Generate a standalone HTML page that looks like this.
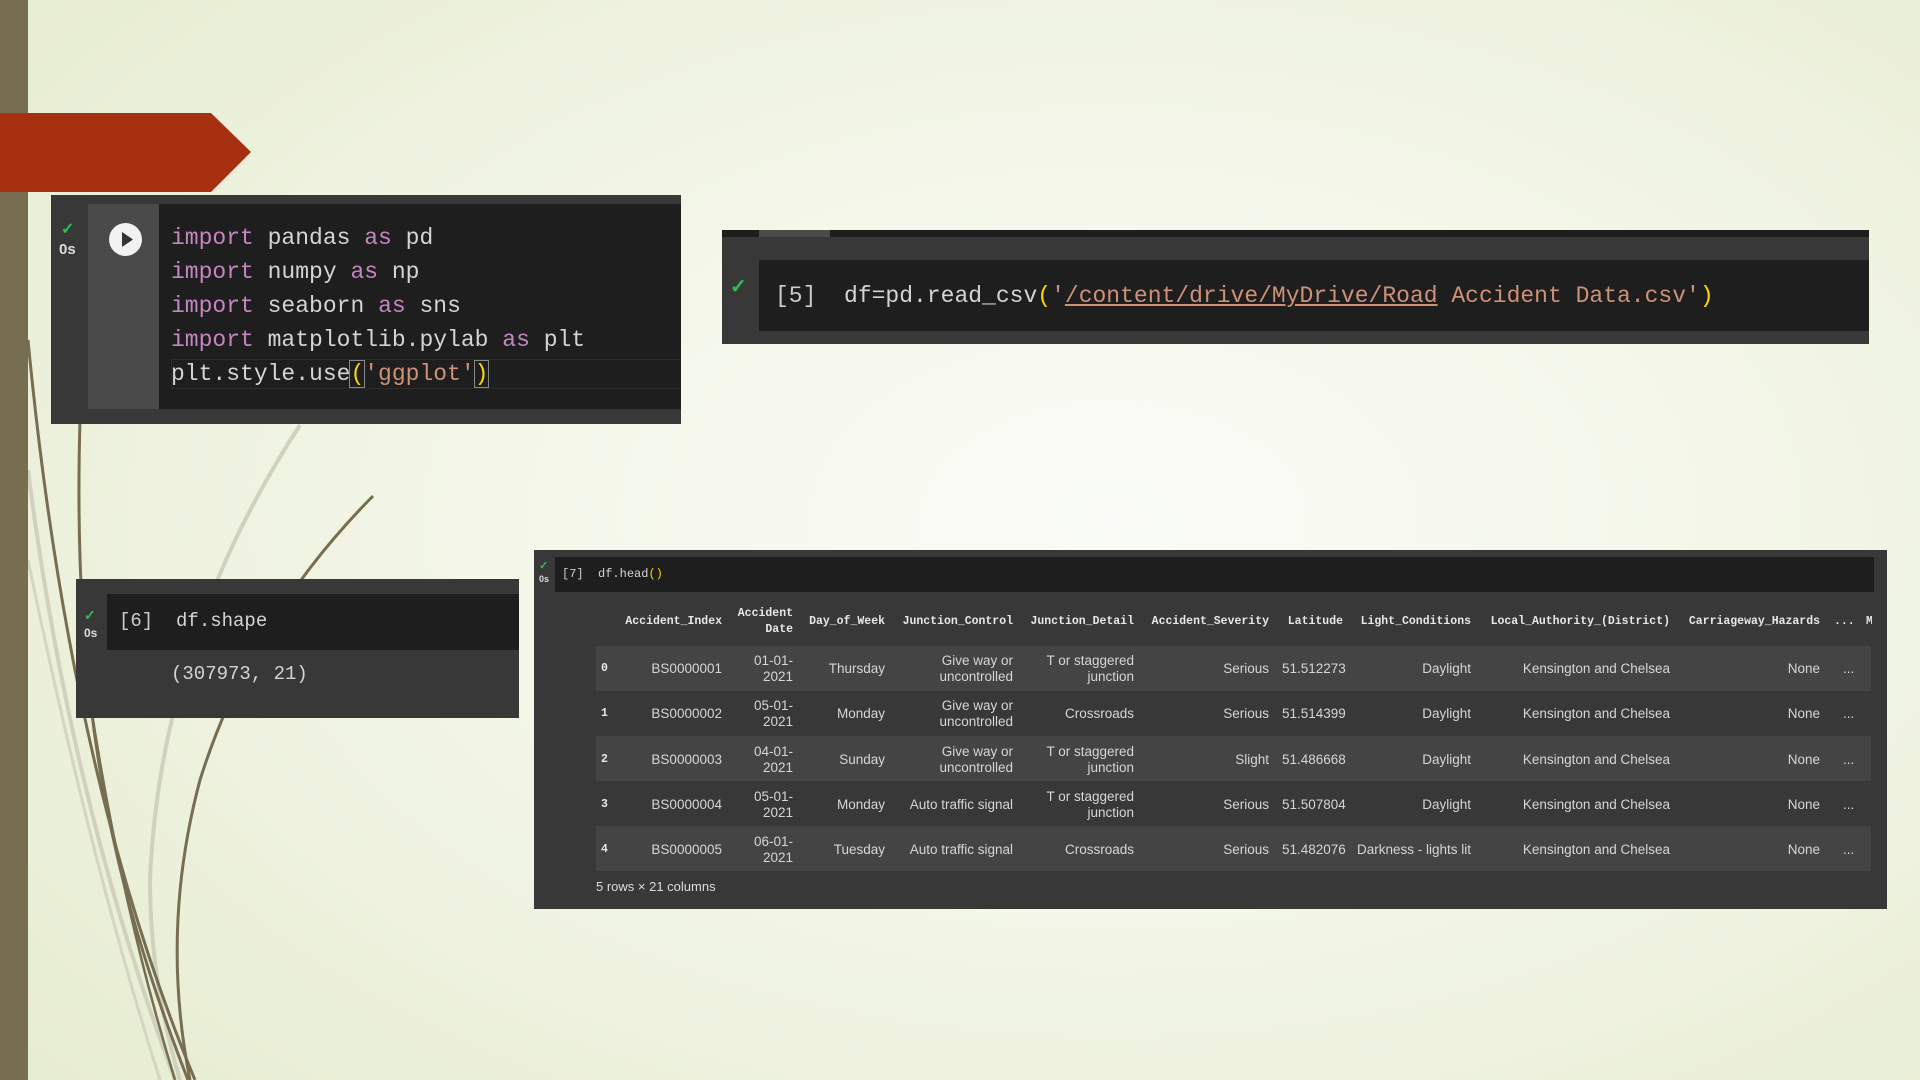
<!DOCTYPE html>
<html><head><meta charset="utf-8"><style>
*{margin:0;padding:0;box-sizing:border-box}
body{width:1920px;height:1080px;overflow:hidden;position:relative;font-family:"Liberation Sans",sans-serif;
background:radial-gradient(ellipse 75% 80% at 58% 48%,#fbfcf7 0%,#f3f6e8 45%,#e6ecd0 100%)}
.abs{position:absolute}
.mono{font-family:"Liberation Mono","DejaVu Sans Mono",monospace}
.kw{color:#c586c0}.tx{color:#d4d4d4}.st{color:#ce9178}.pn{color:#ffd700}
.chk{position:absolute;color:#2fbf55;font-size:16px;font-weight:bold}
.tc{position:absolute;font-size:13.5px;color:#d6d6d6;text-align:right;line-height:16px}
.th{position:absolute;font-family:"Liberation Mono",monospace;font-weight:bold;font-size:11.5px;color:#e8e8e8;text-align:right;line-height:16px}
</style></head><body>
<svg class="abs" style="left:0;top:0" width="1920" height="1080">
<path d="M300,425 Q160,640 150,880 Q150,980 180,1080" stroke="#cfd2bd" stroke-width="4" fill="none"/>
<path d="M28,470 Q70,800 175,1080" stroke="#cfd2bd" stroke-width="4" fill="none"/>
<path d="M28,560 Q90,860 160,1080" stroke="#d3d6c2" stroke-width="3" fill="none"/>
<path d="M28,340 Q70,780 195,1080" stroke="#776d50" stroke-width="3" fill="none"/>
<path d="M80,420 C72,700 110,880 188,1080" stroke="#776d50" stroke-width="3" fill="none"/>
<path d="M373,496 Q250,620 200,780 Q160,930 190,1080" stroke="#776d50" stroke-width="3" fill="none"/>
<path d="M90,700 Q120,900 175,1080" stroke="#776d50" stroke-width="2.5" fill="none"/>
</svg>
<div class="abs" style="left:0;top:0;width:28px;height:1080px;background:#776d51"></div>
<svg class="abs" style="left:0;top:113px" width="252" height="79"><polygon points="0,0 211,0 251,39 211,79 0,79" fill="#a73011"/></svg>

<!-- cell1 -->
<div class="abs" style="left:51px;top:195px;width:630px;height:229px;background:#383838">
 <div class="abs" style="left:37px;top:9px;width:71px;height:205px;background:#4a4a4a"></div>
 <div class="abs" style="left:108px;top:9px;width:522px;height:205px;background:#1e1e1e"></div>
 <div class="chk" style="left:10px;top:24px">✓</div>
 <div class="abs" style="left:8px;top:46px;color:#ddd;font-size:15px;font-weight:bold">0s</div>
 <div class="abs" style="left:58px;top:28px;width:33px;height:33px;border-radius:50%;background:#f2f2f2"></div>
 <svg class="abs" style="left:58px;top:28px" width="33" height="33"><polygon points="13,9 24,16.5 13,24" fill="#333"/></svg>
 <div class="abs" style="left:120px;top:164px;width:510px;height:30px;border:1px solid #2c2c2c;border-right:none"></div>
 <div class="abs mono" style="left:120px;top:26px;font-size:23px;line-height:34px;white-space:pre"><span class="kw">import</span><span class="tx"> pandas </span><span class="kw">as</span><span class="tx"> pd</span>
<span class="kw">import</span><span class="tx"> numpy </span><span class="kw">as</span><span class="tx"> np</span>
<span class="kw">import</span><span class="tx"> seaborn </span><span class="kw">as</span><span class="tx"> sns</span>
<span class="kw">import</span><span class="tx"> matplotlib.pylab </span><span class="kw">as</span><span class="tx"> plt</span>
<span class="tx">plt.style.use</span><span class="pn" style="outline:1px solid #888">(</span><span class="st">'ggplot'</span><span class="pn" style="outline:1px solid #888">)</span></div>
</div>

<!-- cell2 -->
<div class="abs" style="left:722px;top:230px;width:1147px;height:114px;background:#383838">
 <div class="abs" style="left:0;top:0;width:1147px;height:7px;background:#1e1e1e"></div>
 <div class="abs" style="left:37px;top:0;width:71px;height:7px;background:#4a4a4a"></div>
 <div class="abs" style="left:37px;top:30px;width:1110px;height:71px;background:#1e1e1e"></div>
 <div class="chk" style="left:8px;top:44px;font-size:20px">✓</div>
 <div class="abs mono" style="left:53px;top:51px;font-size:23px;line-height:30px;white-space:pre"><span style="color:#ccc">[5]</span><span class="tx">  df=pd.read_csv</span><span class="pn">(</span><span class="st">'<u>/content/drive/MyDrive/Road</u> Accident Data.csv'</span><span class="pn">)</span></div>
</div>

<!-- cell3 -->
<div class="abs" style="left:76px;top:579px;width:443px;height:139px;background:#383838">
 <div class="abs" style="left:31px;top:15px;width:412px;height:56px;background:#1e1e1e"></div>
 <div class="chk" style="left:8px;top:28px;font-size:14px">✓</div>
 <div class="abs" style="left:8px;top:47px;color:#ddd;font-size:12px;font-weight:bold">0s</div>
 <div class="abs mono" style="left:43px;top:31px;font-size:19px;color:#ccc;white-space:pre">[6]  <span class="tx">df.shape</span></div>
 <div class="abs mono" style="left:95px;top:84px;font-size:19px;color:#d4d4d4">(307973, 21)</div>
</div>

<!-- cell4 -->
<div class="abs" style="left:534px;top:550px;width:1353px;height:359px;background:#383838;overflow:hidden">
 <div class="abs" style="left:21px;top:7px;width:1319px;height:35px;background:#1e1e1e"></div>
 <div class="chk" style="left:5px;top:9px;font-size:11px">✓</div>
 <div class="abs" style="left:5px;top:24px;color:#ddd;font-size:9px;font-weight:bold">0s</div>
 <div class="abs mono" style="left:28px;top:17px;font-size:12px;color:#ccc;white-space:pre">[7]  <span class="tx">df.head</span><span class="pn">()</span></div>
 <div class="abs" style="left:62px;top:96px;width:1275px;height:45px;background:#444"></div>
 <div class="abs" style="left:62px;top:186px;width:1275px;height:45px;background:#444"></div>
 <div class="abs" style="left:62px;top:276px;width:1275px;height:45px;background:#444"></div>
 <div class="abs" style="left:62px;top:329px;font-size:13px;color:#ddd">5 rows × 21 columns</div>
</div>
<div id="tbl"></div>
<script>
var cols=[[722,110,"Accident_Index"],[793,70,"Accident<br>Date"],[885,90,"Day_of_Week"],[1013,125,"Junction_Control"],[1134,120,"Junction_Detail"],[1269,135,"Accident_Severity"],[1343,70,"Latitude"],[1471,125,"Light_Conditions"],[1670,195,"Local_Authority_(District)"],[1820,145,"Carriageway_Hazards"]];
var rows=[
["BS0000001","01-01-<br>2021","Thursday","Give way or<br>uncontrolled","T or staggered<br>junction","Serious","51.512273","Daylight","Kensington and Chelsea","None"],
["BS0000002","05-01-<br>2021","Monday","Give way or<br>uncontrolled","Crossroads","Serious","51.514399","Daylight","Kensington and Chelsea","None"],
["BS0000003","04-01-<br>2021","Sunday","Give way or<br>uncontrolled","T or staggered<br>junction","Slight","51.486668","Daylight","Kensington and Chelsea","None"],
["BS0000004","05-01-<br>2021","Monday","Auto traffic signal","T or staggered<br>junction","Serious","51.507804","Daylight","Kensington and Chelsea","None"],
["BS0000005","06-01-<br>2021","Tuesday","Auto traffic signal","Crossroads","Serious","51.482076","Darkness - lights lit","Kensington and Chelsea","None"]];
var h="";
cols.forEach(function(c){var two=c[2].indexOf("<br>")>0;h+='<div class="th" style="left:'+(c[0]-c[1])+'px;width:'+c[1]+'px;top:'+(two?606:614)+'px">'+c[2]+'</div>';});
h+='<div class="th" style="left:1834px;width:30px;top:614px;text-align:left">...</div><div class="th" style="left:1866px;width:6px;overflow:hidden;top:614px;text-align:left">M</div>';
rows.forEach(function(r,i){var cy=669+i*45.3;
h+='<div class="th" style="left:601px;width:20px;text-align:left;top:'+(cy-8)+'px">'+i+'</div>';
r.forEach(function(v,j){var c=cols[j];var two=v.indexOf("<br>")>0;var lt=c[0]-c[1];var w=c[1];
if(j==6){lt=1282;w=70;}
h+='<div class="tc" style="left:'+lt+'px;width:'+w+'px;top:'+(cy-(two?16:8))+'px;'+(j==6?'text-align:left':'')+'">'+v+'</div>';});
h+='<div class="tc" style="left:1843px;width:20px;text-align:left;top:'+(cy-8)+'px">...</div>';});
document.getElementById("tbl").innerHTML=h;
</script>
</body></html>
